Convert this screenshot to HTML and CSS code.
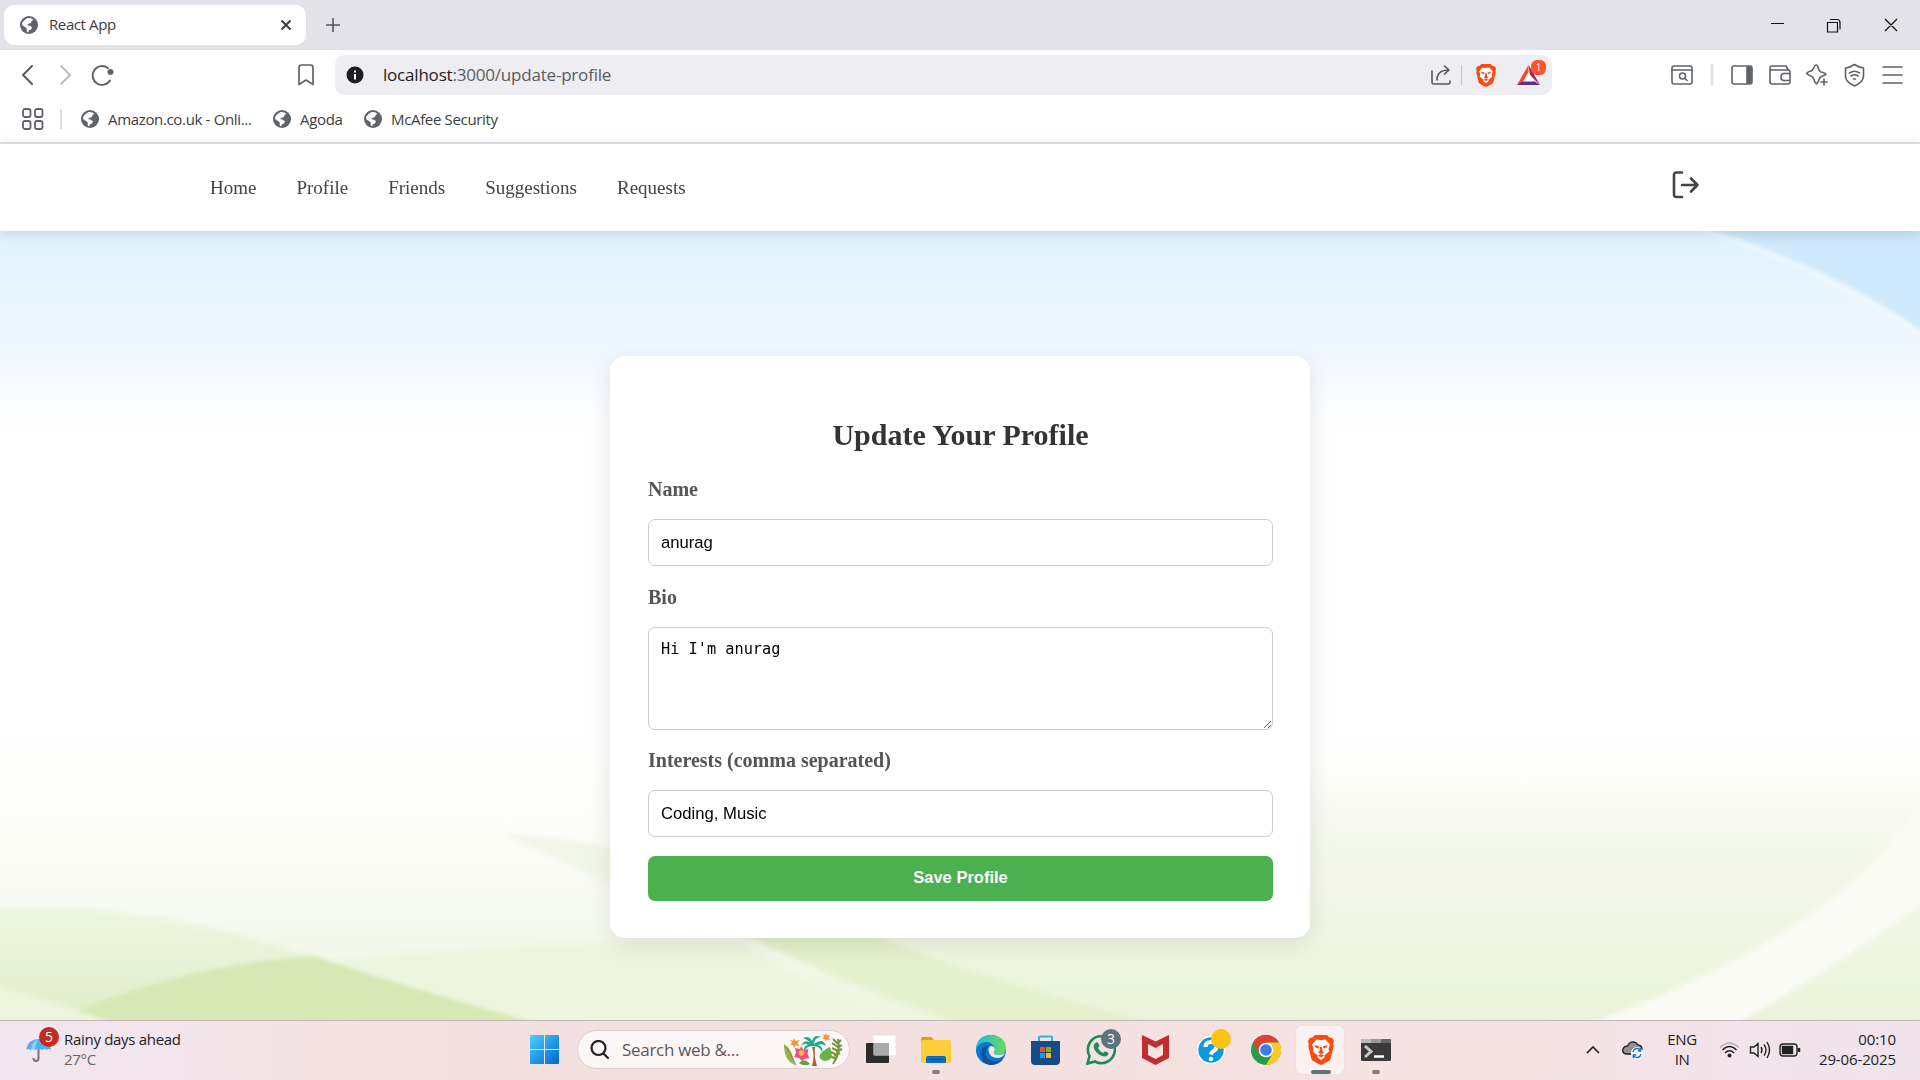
FILE: index.html
```html
<!DOCTYPE html>
<html lang="en">
<head>
<meta charset="utf-8">
<title>React App</title>
<link rel="stylesheet" href="styles.css">
</head>
<body>
<svg class="defs" aria-hidden="true">
  <symbol id="globe" viewBox="0 0 18 18"><circle cx="9" cy="9" r="9" fill="#5f6368"/><path d="M7.500 2 11 2.300 13.500 4l-2 1-.5 2-2.500.700L7 9.300l2.500.200 2.500 1.700-1 2.300-2 .8-.8 2.200L6.500 15l.3-2.500L5 11 2.500 9.500 2 7l2.500-3z" fill="#fff"/></symbol>
  <symbol id="brave" viewBox="0 0 26 30"><path d="M7 0h12l3 3 2-.3L26 6l-.8 3 .5 2-3 12.500c-.5 1.700-2 3-9.700 6.500C5.300 26.500 3.800 25.200 3.300 23.500L.3 11l.5-2L0 6l2-3.300L4 3z" fill="#fb4a12"/><path d="M8.500 4.500 13 5.300l4.500-.8 4.500 5-1.500 4 .5 3-4.500 3.800v2.200L13 25l-3.500-2.500v-2.200L5 16.500l.5-3-1.500-4z" fill="#fff"/><path d="m6.500 10 4.500 1.200-.5 2.300-3-1zM19.500 10 15 11.200l.5 2.300 3-1zM12 12h2l.5 4 1.500 1.500-3 1.700-3-1.700 1.500-1.500zM9.800 20.500 13 19.200l3.200 1.300L13 22.300z" fill="#fb4a12"/></symbol>
</svg>

<header class="browser">
  <div class="tabstrip">
    <div class="tab">
      <svg class="globe"><use href="#globe"/></svg>
      <span class="tab-title">React App</span>
      <svg class="tab-close" width="12" height="12" viewBox="0 0 12 12"><path d="m1.500 1.500 9 9m0-9-9 9" stroke="#3b3e43" stroke-width="2"/></svg>
    </div>
    <svg class="new-tab" width="14" height="14" viewBox="0 0 14 14"><path d="M7 0v14M0 7h14" stroke="#55585d" stroke-width="1.600"/></svg>
    <svg class="window-buttons" width="130" height="18" viewBox="0 0 130 18"><path d="M1 7.500h13M57.500 6.500h10v9.500h-10zM60 3.500h7q3 0 3 3v7M115 3l12 12m0-12-12 12" fill="none" stroke="#111" stroke-width="1.200"/></svg>
  </div>
  <div class="toolbar">
    <svg class="history" width="92" height="22" viewBox="0 0 92 22" fill="none" stroke-width="1.900" stroke-linecap="round" stroke-linejoin="round"><path d="M10 2 1 11l9 9" stroke="#55585d"/><path d="m39 2 9 9-9 9" stroke="#bdbdc1"/><path d="M86 4.200A9.400 9.400 0 1 0 88 16.500" stroke="#5f6368"/><circle cx="88.500" cy="8" r="3" fill="#5f6368"/></svg>
    <svg class="bookmark" width="16" height="22" viewBox="0 0 16 22"><path d="M3.500 1h9q2.500 0 2.500 2.500v17L8 16l-7 4.500v-17Q1 1 3.500 1z" fill="none" stroke="#5f6368" stroke-width="1.700" stroke-linejoin="round"/></svg>
    <div class="address">
      <svg width="18" height="18" viewBox="0 0 18 18"><circle cx="9" cy="9" r="8.500" fill="#1d1d22"/><path d="M9 4.500v2M9 8v5.500" stroke="#fff" stroke-width="2"/></svg>
      <span class="url"><b>localhost</b>:3000/update-profile</span>
      <svg class="share" width="20" height="20" viewBox="0 0 20 20" fill="none" stroke="#55585d" stroke-width="1.600" stroke-linecap="round" stroke-linejoin="round"><path d="M1 6v11q0 2 2 2h14q2 0 2-2v-1M6 15q0-10 12-10M13.500 1l4.500 4-4.500 4"/></svg>
      <i class="thin-rule"></i>
      <svg class="brave-small" width="20" height="23"><use href="#brave"/></svg>
      <svg class="rewards" width="23" height="21" viewBox="0 0 23 21"><path d="M11.500 0 0 20 11.500 13z" fill="#ff4724"/><path d="M11.500 0 23 20 13 10z" fill="#9e1f63"/><path d="M0 20h23l-6-4H6z" fill="#662d91"/><path d="m11.500 7 5.500 9.500H6z" fill="#fff"/></svg>
      <span class="rewards-count">1</span>
    </div>
    <svg class="tool-icons" width="232" height="24" viewBox="0 0 232 24" fill="none" stroke="#5f6368" stroke-width="1.600" stroke-linejoin="round" stroke-linecap="round">
      <rect x="1" y="3" width="20" height="18" rx="2"/><path d="M1 7h20"/><circle cx="11.500" cy="13" r="3"/><path d="m14 15.500 2 2"/><path d="M41 2v19" stroke="#dedee4" stroke-width="2.500"/>
      <rect x="61" y="3" width="20" height="18" rx="2"/><path d="M76 4h4v16h-4z" fill="#5f6368"/>
      <path d="M99 6v13q0 2 2 2h16q2 0 2-2V9q0-2-2-2h-16q-2 0-2-2t2-2h14l2 3M119 10.500h-6q-3 0-3 3.500t3 3.500h6"/>
      <path d="M145.500 2q1 0 1.700 3t2.800 4q5 1.300 5 2.500l-3 1.300q-3 .8-4 4t-2.500 4q-1.500-.8-2.500-4t-3.500-4-3.500-2 3.500-2.500q2.500-.7 3.500-3.700T145.500 2zM153 16v6m-3-3h6"/>
      <path d="M183.500 1.500q4.500 3 9 3.500v8q0 6-9 10-9-4-9-10V5q4.500-.5 9-3.500zM178.500 10q5-3.500 10 0m-8.500 3q3.500-2.500 7 0M182.500 16h2"/>
      <path d="M212 4h19m-19 8h19m-19 8h19"/>
    </svg>
  </div>
  <div class="bookmarks">
    <svg class="apps" width="22" height="22" viewBox="0 0 22 22" fill="none" stroke="#5f6368" stroke-width="1.800"><rect x="1" y="1" width="7.500" height="8" rx="2"/><rect x="13" y="1" width="7.500" height="8" rx="2"/><rect x="1" y="13" width="7.500" height="8" rx="2"/><rect x="13" y="13" width="7.500" height="8" rx="2"/></svg>
    <i class="divider"></i>
    <span class="mark"><svg class="globe"><use href="#globe"/></svg><span>Amazon.co.uk - Onli...</span></span>
    <span class="mark"><svg class="globe"><use href="#globe"/></svg><span>Agoda</span></span>
    <span class="mark"><svg class="globe"><use href="#globe"/></svg><span>McAfee Security</span></span>
  </div>
</header>

<nav class="navbar">
  <a>Home</a><a>Profile</a><a>Friends</a><a>Suggestions</a><a>Requests</a>
  <svg class="logout" width="28" height="28" viewBox="0 0 28 28" fill="none" stroke="#444" stroke-width="2.600" stroke-linecap="round" stroke-linejoin="round"><path d="M10 1.500H4.500Q2 1.500 2 4v19.500Q2 26 4.500 26H10M10 14h15.500M19 7.500l6.500 6.500-6.500 6.500"/></svg>
</nav>

<main class="page">
  <svg class="backdrop" viewBox="0 231 1920 789" preserveAspectRatio="none">
    <defs>
      <linearGradient id="sky" gradientUnits="userSpaceOnUse" x1="0" y1="231" x2="0" y2="1020">
        <stop offset="0" stop-color="#e0f3fd"/><stop offset=".1" stop-color="#eaf6fd"/><stop offset=".16" stop-color="#f2f8ff"/><stop offset=".21" stop-color="#fafcff"/><stop offset=".26" stop-color="#fff"/><stop offset=".63" stop-color="#fff"/><stop offset=".74" stop-color="#fcfdf8"/><stop offset=".86" stop-color="#f7faf1"/><stop offset="1" stop-color="#edf5de"/>
      </linearGradient>
      <linearGradient id="hill" x1="0" y1="0" x2="0" y2="1"><stop offset="0" stop-color="#eef6e1"/><stop offset="1" stop-color="#e1edc8"/></linearGradient>
      <linearGradient id="rise" x1="0" y1="0" x2="0" y2="1"><stop offset="0" stop-color="#f1f6e3" stop-opacity="0"/><stop offset=".45" stop-color="#f1f6e6" stop-opacity=".8"/><stop offset="1" stop-color="#eaf3d9"/></linearGradient>
      <filter id="soft" x="-5%" y="-5%" width="110%" height="110%"><feGaussianBlur stdDeviation="2"/></filter>
    </defs>
    <path d="M0 231h1920v789H0z" fill="url(#sky)"/>
    <g filter="url(#soft)">
      <path d="M1708 229q120 36 216 103v-103z" fill="#cde9fb"/>
      <path d="M1700 229q130 40 224 109" fill="none" stroke="#f7fcff" stroke-width="5" opacity=".45"/>
      <path d="M505 835q60 2 110 14v40q-50-28-110-54z" fill="#f1f6e6"/>
      <path d="M330 962q150-22 410-20l140 82H500z" fill="#edf5df"/>
      <path d="M870 760h1060v265H1160q-170-28-290-90z" fill="url(#rise)"/>
      <path d="M-5 907q160-5 317 50L80 1025H-5z" fill="url(#hill)"/>
      <path d="M740 933h130q90 40 290 92H965q-120-41-225-92z" fill="#e5f0cd"/>
      <path d="M75 1012q115-48 240-56 70 25 225 68H75z" fill="#d7e8b4"/>
      <path d="M-5 986q55 14 125 40H-5z" fill="#edf5dc"/>
      <path d="M1923 798q-80 135-338 227h150q115-67 188-122z" fill="#f9fbf4"/>
    </g>
  </svg>
  <form class="card">
    <h2>Update Your Profile</h2>
    <label for="name">Name</label>
    <input id="name" value="anurag">
    <label for="bio">Bio</label>
    <textarea id="bio" spellcheck="false">Hi I'm anurag</textarea>
    <label for="interests">Interests (comma separated)</label>
    <input id="interests" value="Coding, Music">
    <button type="button">Save Profile</button>
  </form>
</main>

<footer class="taskbar">
  <div class="weather">
    <div class="umbrella">
      <svg width="26" height="26" viewBox="0 0 26 26"><path d="M12.500 2v19q0 3-2.500 3t-2.500-3" fill="none" stroke="#777" stroke-width="2"/><path d="M0 13Q2 2 13 2t12 11q-2-2-4 0-2-2-4.500 0-3-2-7.500 0-2-2-4.500 0-2-2-4.500 0z" fill="#57abf3"/><path d="M5 13Q5 5 12 2.500 9 7 9 13q-2-2-4 0z" fill="#90d0fc"/></svg>
      <span class="badge badge-red">5</span>
    </div>
    <div class="weather-text"><span>Rainy days ahead</span><span class="muted">27°C</span></div>
  </div>

  <div class="dock">
    <svg class="start" width="29" height="29" viewBox="0 0 29 29"><defs><linearGradient id="win" x1="0" y1="0" x2="1" y2="1"><stop stop-color="#4cd0fb"/><stop offset="1" stop-color="#0067cf"/></linearGradient></defs><path d="M1 0h13v14H0V1q0-1 1-1zM15 0h13q1 0 1 1v13H15zM0 15h14v14H1q-1 0-1-1zM15 15h14v13q0 1-1 1H15z" fill="url(#win)"/></svg>
    <div class="search">
      <svg width="20" height="20" viewBox="0 0 20 20" fill="none" stroke="#222" stroke-width="2.200" stroke-linecap="round"><circle cx="8.500" cy="8" r="7"/><path d="m13.500 13.500 4.500 4.500"/></svg>
      <span class="search-text">Search web &amp;...</span>
      <svg class="garden" width="60" height="34" viewBox="0 0 60 34">
        <path d="M29 14q3 8 0 19h5q-3-9-2-19z" fill="#a06a32"/>
        <path d="M30 12Q22 4 18 13q4-4 7-1-5 1-4 7 2-6 9-6 7 0 9 6 2-5-4-7 4-2 8 1-3-9-12-2 0-6 7-7-7-3-9 4-3-6-9-3 6 2 9 7z" fill="#25a98b"/>
        <path d="M1 11q8 4 11 21Q1 28 1 11z" fill="#8cba4d"/><path d="M2 13q6 8 11 19" stroke="#c46d43" fill="none"/>
        <path d="M47 14q5 14-6 14-8-3-2-9 5-4 8-5z" fill="#67b346"/><path d="M16 30q5-6 11 1-6 3-11-1z" fill="#5fa43d"/>
        <path d="M55 6q3 14-5 25M54 10l-4-4m5 8-6-4m6 8-6-3m5 7-6-3m5 7-6-3m7-12 4-4m-4 8 5-3m-6 7 6-3m-8 7 6-3" stroke="#76943c" stroke-width="2" fill="none"/>
        <path d="m18 13 2.500 4 5-1-1 5 2 4-5 1-2.500 2-3-3-5-1 2-4-1-5 5 1z" fill="#ed4f85"/><circle cx="18.500" cy="20" r="2.800" fill="#f6b944"/>
        <path d="m11 5 1.500 3 4-1-2 3 2 3-4-.5L11 15l-1-3-3-.5 2.500-2L7 7l3.500.5zM43 0l1 2.500 3-.5-1.500 2.500L47 7l-3-.5L42.500 8l-1-2-2.500-.5L41 4l-1-2.500 2.500.5z" fill="#f6923c"/>
      </svg>
    </div>
    <span class="slot"><svg width="30" height="30" viewBox="0 0 30 30"><rect y="8" width="23" height="20" rx="1" fill="#2c2c2c"/><rect x="7.500" y=".5" width="22" height="20" rx="1" fill="#fff" opacity=".92"/><path d="M8 8h15v12H8z" fill="#aaa"/></svg></span>
    <span class="slot running"><svg width="30" height="30" viewBox="0 0 30 30"><path d="M0 4q0-2 2-2h8l3 3h12v6H0z" fill="#dfa00a"/><rect y="5" width="30" height="23" rx="2" fill="#ffcc3a"/><path d="M5 28v-5q0-2 2-2h16q2 0 2 2v5z" fill="#0e6cc4"/><path d="M8 24.500h14" stroke="#084d94"/></svg></span>
    <span class="slot"><svg width="30" height="30" viewBox="0 0 30 30"><defs><linearGradient id="e1"><stop stop-color="#24b8e8"/><stop offset="1" stop-color="#68dc55"/></linearGradient></defs><circle cx="15" cy="15" r="15" fill="#0b78d0"/><path d="M0 14Q1 0 15 0q14 1 15 13 0 6-7 7-6 0-5-3 2-8-6-10Q4 6 0 14z" fill="url(#e1)"/><path d="M10 15q-2 10 8 11 6 1 10-4-4 8-13 8Q5 29 5 19q0-8 8-9-2 1-3 5z" fill="#12519c"/><path d="M12.500 15q0-4 3.500-4 4 1 2 6-1 3 5 3 3 0 6-2-2 5-8 5-8-1-8.500-8z" fill="#f6e4e3"/></svg></span>
    <span class="slot"><svg width="29" height="30" viewBox="0 0 29 30"><path d="M8 6V2.500q0-1 1-1h11q1 0 1 1V6" fill="none" stroke="#23b5ea" stroke-width="2"/><path d="M0 6h29v20q0 4-4 4H4q-4 0-4-4z" fill="#164b88"/><path d="M9 12h5v5H9z" fill="#f25022"/><path d="M15 12h5v5h-5z" fill="#7fba00"/><path d="M9 18h5v5H9z" fill="#00a4ef"/><path d="M15 18h5v5h-5z" fill="#ffb900"/></svg></span>
    <span class="slot"><svg width="30" height="30" viewBox="0 0 30 30"><path d="m1.500 28.500 2-7.500A13.500 13.500 0 1 1 9 26.500z" fill="none" stroke="#1c8b55" stroke-width="2.600"/><path d="M9.500 8q2-1.500 3 .5l1 2.500-1.500 2q1.500 3.500 5 5l2-1.800 3.300 1.500q.8 1-.8 2.800-2.500 2-6.500 0-5-2.500-7-7-1-3.500 1.500-5.500z" fill="#1c8b55"/></svg><b class="badge badge-slate">3</b></span>
    <span class="slot"><svg width="27" height="30" viewBox="0 0 27 30"><path d="m0 0 13.500 6.500L27 0v23l-13.500 7L0 23z" fill="#c02d2f"/><path d="m6 9 7.500 4L21 9v11l-7.500 4L6 20z" fill="#f6e3e2"/></svg></span>
    <span class="slot"><svg width="30" height="30" viewBox="0 0 30 30"><circle cx="15" cy="15" r="14" fill="#fff"/><circle cx="15" cy="15" r="12.700" fill="#0b9bda"/><path d="M9.500 12q0-5 5.500-5t5.500 4.500q0 3-3 4.500-2 1-2.500 3.500" fill="none" stroke="#fff" stroke-width="4"/><circle cx="15" cy="24" r="2.300" fill="#fff"/></svg><b class="badge badge-yellow"></b></span>
    <span class="slot"><svg width="30" height="30" viewBox="0 0 30 30"><circle cx="15" cy="15" r="15" fill="#2a9b48"/><path d="M2 7.500A15 15 0 0 1 28 7.500H15L8.500 18.800z" fill="#dc4337"/><path d="M28 7.500A15 15 0 0 1 15 30l6.500-11.200L21.500 11 15 7.500z" fill="#fdc926"/><circle cx="15" cy="15" r="7.300" fill="#fff"/><circle cx="15" cy="15" r="5.800" fill="#3d7cec"/></svg></span>
    <span class="slot active"><svg width="26" height="30"><use href="#brave"/></svg></span>
    <span class="slot running"><svg width="30" height="30" viewBox="0 0 30 30"><rect y="4" width="30" height="22" rx="1.500" fill="#3a3a3a"/><path d="M0 8V5.500Q0 4 1.500 4H10v4z" fill="#bbb"/><path d="M10 4h10v4H10z" fill="#999"/><path d="M20 4h8.500Q30 4 30 5.500V8H20z" fill="#666"/><path d="m4 11 6 5.500L4 22" fill="none" stroke="#c8c8c8" stroke-width="3"/><path d="M13 21.500h10" stroke="#fff" stroke-width="2.500"/></svg></span>
  </div>

  <div class="tray">
    <svg width="14" height="8" viewBox="0 0 14 8"><path d="m1 7 6-6 6 6" fill="none" stroke="#222" stroke-width="1.700"/></svg>
    <svg class="cloud" width="22" height="20" viewBox="0 0 22 20"><path d="M4 14Q0 13 .8 9.500 2 6 5.500 6 8 1 12 2q3 .5 4 3 4 .5 4 4l-2 5z" fill="#929292" stroke="#222" stroke-width="1.300"/><circle cx="15" cy="13" r="6" fill="#fff"/><path d="M11 12q1-3.500 4-3.500 2.500 0 3.500 2m.2-2.500v3h-3M19 14q-1 3.500-4 3.500-2.500 0-3.500-2m-.2 2.500v-3h3" fill="none" stroke="#1976c9" stroke-width="1.400"/></svg>
    <div class="lang"><span>ENG</span><span>IN</span></div>
    <svg class="status" width="82" height="20" viewBox="0 0 82 20" fill="none" stroke="#222" stroke-width="1.400"><path d="M1 7.500q9.500-9 19 0" stroke="#bbaeb3"/><path d="M3.500 10q7-7 14 0M6 13q4.500-4.500 9 0"/><circle cx="10.500" cy="15.500" r="2" fill="#222" stroke="none"/><path d="M31.500 7v6h3.500l4 3.500v-13L35 7zM42 7q2 3 0 6m3-8.500q4 5.500 0 11M48 2q5 8 0 16"/><rect x="61" y="4" width="17" height="12" rx="3"/><rect x="63.500" y="6.500" width="10" height="7" fill="#222"/><path d="M80 8v4" stroke-width="2.500"/></svg>
    <div class="clock"><span>00:10</span><span>29-06-2025</span></div>
  </div>
</footer>
</body>
</html>
```
FILE: styles.css
```css
* { box-sizing: border-box; }
body { margin: 0; width: 1920px; height: 1080px; overflow: hidden; display: flex; flex-direction: column; font-family: "Open Sans", sans-serif; color: #333; }
svg { display: block; flex: none; }
.defs { position: absolute; width: 0; height: 0; }
.globe { width: 18px; height: 18px; }

.browser { height: 144px; flex: none; background: #fff; border-bottom: 2px solid #e3e2e8; }
.tabstrip { height: 50px; background: #e3e2e8; display: flex; align-items: center; padding-left: 4px; }
.tab { width: 302px; height: 40px; border-radius: 10px; background: #fff; display: flex; align-items: center; padding: 0 14px 0 16px; }
.tab-title { margin-left: 11px; padding-bottom: 2px; flex: 1; font-size: 15px; letter-spacing: -.4px; color: #3b3e43; white-space: nowrap; }
.new-tab { margin-left: 20px; }
.window-buttons { margin-left: auto; margin-right: 20px; }
.toolbar { height: 50px; display: flex; align-items: center; padding: 0 17px 0 22px; }
.bookmark { margin-left: 184px; }
.address { position: relative; width: 1217px; height: 40px; margin-left: 21px; border-radius: 10px; background: #ededf2; display: flex; align-items: center; padding-left: 11px; }
.url { margin-left: 19px; padding-bottom: 2px; font-size: 17px; letter-spacing: -.2px; color: #5a5b62; white-space: nowrap; }
.url b { font-weight: 400; color: #1d1d22; }
.share { margin-left: auto; }
.thin-rule { width: 1px; height: 20px; background: #c4c4cb; margin: 0 14px 0 10px; }
.rewards { margin: 0 12px 0 21px; }
.rewards-count { position: absolute; right: 6px; top: 5px; width: 15px; height: 15px; border-radius: 6px; background: #ff5226; color: #fff; font-size: 10px; line-height: 15px; text-align: center; }
.tool-icons { margin-left: auto; }
.bookmarks { height: 38px; display: flex; align-items: center; padding-left: 22px; font-size: 15px; letter-spacing: -.34px; color: #3b3e43; white-space: nowrap; }
.divider { width: 2px; height: 20px; margin: 0 19px 0 16px; background: #dedee4; }
.mark { display: flex; gap: 9px; margin-right: 21.5px; padding-bottom: 1px; }
.mark svg { align-self: center; }

.navbar { position: relative; z-index: 1; height: 87px; flex: none; background: #fff; box-shadow: 0 2px 12px rgba(0,0,0,.15); display: flex; align-items: center; gap: 40px; padding: 0 220px 0 210px; font: 19px "Liberation Serif", serif; color: #444; }
.logout { margin: -6px 0 0 auto; }

.page { position: relative; height: 789px; flex: none; display: flex; justify-content: center; align-items: flex-start; padding-top: 125px; }
.backdrop { position: absolute; inset: 0; width: 100%; height: 100%; }
.card { position: relative; width: 700px; height: 582px; border-radius: 15px; background: #fff; box-shadow: 0 5px 25px rgba(0,0,0,.1); padding: 60px 37px 37px 38px; display: flex; flex-direction: column; }
.card h2 { margin: 0 0 19px; text-align: center; font: bold 30px/38px "Liberation Serif", serif; color: #333; }
.card label { font: bold 20px/32px "Liberation Serif", serif; color: #555; margin-bottom: 14px; }
.card input, .card textarea { flex: none; width: 625px; margin: 0 0 15px; border: 1px solid #ccc; border-radius: 7px; padding: 12px; background: #fff; color: #000; outline: 0; }
.card input { height: 47px; font: 16.67px "Liberation Sans", sans-serif; }
.card textarea { height: 103px; margin-bottom: 14px; font: 15.25px "DejaVu Sans Mono", monospace; }
.card button { flex: none; height: 45px; margin-top: 4px; padding: 0 0 3px; border: 0; border-radius: 7px; background: #4caf50; color: #fff; font: bold 16.5px "Liberation Sans", sans-serif; }

.taskbar { height: 60px; flex: none; border-top: 1px solid #bfb3b5; background: linear-gradient(90deg, #f1e6ef 0, #f3e5ec 9%, #f5e2e1 18%, #f4dfdf 32%, #f5e2e1 76%, #f3e3ea 90%, #f1e3ec 100%); display: flex; padding-bottom: 2px; font-size: 15px; letter-spacing: -.3px; line-height: 20px; color: #222; white-space: nowrap; }
.weather { width: 530px; display: flex; align-items: center; padding-left: 26px; }
.umbrella { position: relative; width: 38px; }
.badge { position: absolute; width: 20px; height: 20px; border-radius: 50%; color: #fff; font-size: 14px; font-weight: 400; line-height: 20px; text-align: center; letter-spacing: 0; }
.badge-red { left: 13px; top: -10px; background: #c42b1c; }
.weather-text, .lang, .clock { display: flex; flex-direction: column; padding-bottom: 2px; }
.muted { color: #666; }
.dock { display: flex; align-items: center; }
.search { width: 273px; height: 39px; margin: 0 3px 0 18px; border: 1px solid #dccdcf; border-radius: 20px; background: #fcf6f6; display: flex; align-items: center; padding: 0 6px 0 12px; }
.search-text { margin-left: 12px; font-size: 17px; color: #5d5859; }
.garden { margin-left: auto; }
.slot { position: relative; width: 55px; height: 57px; display: flex; align-items: center; justify-content: center; }
.slot svg { position: relative; }
.slot .badge { left: 28px; top: 8px; }
.badge-slate { background: #5c7480; }
.badge-yellow { background: #ffc20d; }
.running::after, .active::after { content: ""; position: absolute; bottom: 4px; width: 8px; height: 4px; border-radius: 2px; background: #8b7e80; }
.active::after { width: 20px; background: #5c7480; }
.active::before { content: ""; position: absolute; left: 3px; top: 5px; width: 48px; height: 48px; border-radius: 5px; background: #fbf1f1; box-shadow: 0 0 1px #cbbcbe; }
.tray { margin-left: auto; display: flex; align-items: center; padding-right: 24px; }
.cloud { margin-left: 22px; }
.lang { margin-left: 23px; align-items: center; }
.status { margin-left: 22px; }
.clock { margin-left: 18px; align-items: flex-end; letter-spacing: -.12px; }
```
